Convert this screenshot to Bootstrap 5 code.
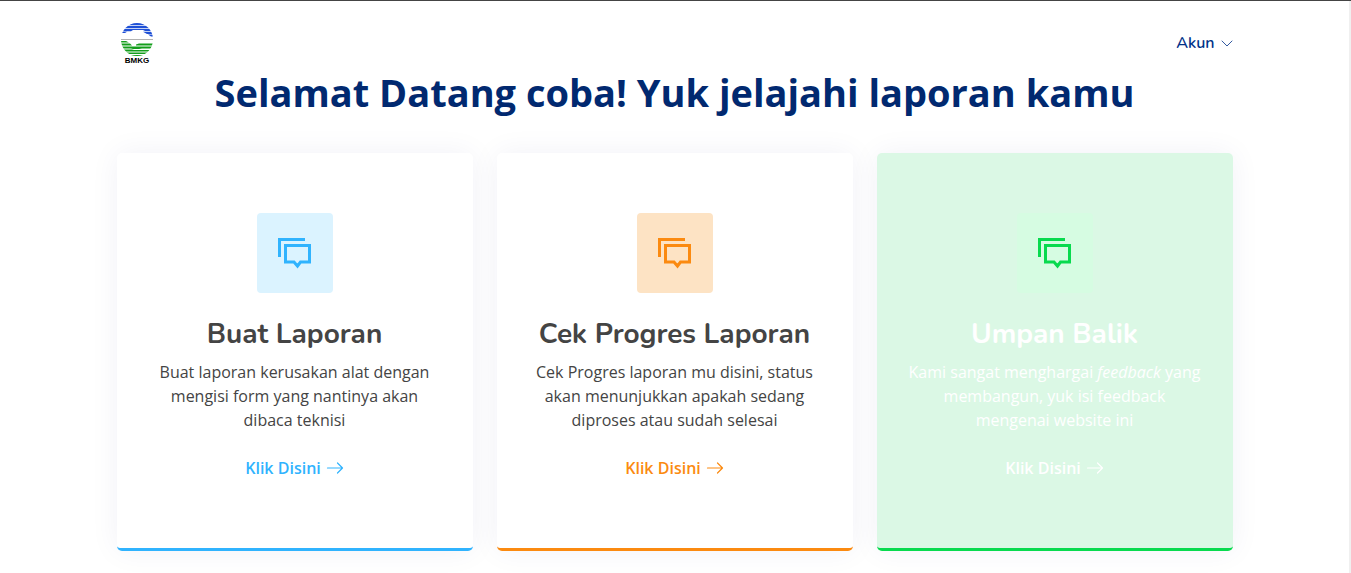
<!DOCTYPE html>
<html lang="id">
<head>
<meta charset="utf-8">
<meta name="viewport" content="width=device-width, initial-scale=1">
<title>BMKG - Laporan</title>
<link href="https://cdn.jsdelivr.net/npm/bootstrap@5.3.0/dist/css/bootstrap.min.css" rel="stylesheet">
<style>
  body { font-family: "Open Sans", sans-serif; color: #444; border-top: 1px solid #444; }
  .page-shell { border-right: 2px solid #f0f0f0; min-height: calc(100vh - 1px); overflow: hidden; }
  .site-header { padding-top: 20px; }
  .site-header .logo { margin-left: 2px; }
  .account-link { font-family: Nunito, Lato, sans-serif; font-weight: 600; color: #013289; line-height: 24px; }
  .account-link svg { opacity: .8; }
  .welcome { color: #012970; font-size: 38px; font-weight: 700; line-height: 46px; margin: 4px 0 38px; }
  .service-box { --tone: #30b3fe; --tint: #dbf3ff; background: #fff; border: 0; border-bottom: 3px solid var(--tone);
    border-radius: 5px; box-shadow: 0 0 30px rgba(1, 41, 112, .06); padding: 60px 30px; text-align: center; color: #444; }
  .service-box.orange { --tone: #fb8a10; --tint: #fde3c4; }
  .service-box.green { --tone: #08da4e; --tint: #d6fce2; background: #dbf8e5; color: #fff; }
  .service-icon { background: var(--tint); color: var(--tone); border-radius: 4px; padding: 22px 20px; margin-bottom: 24px; line-height: 0; }
  .service-box h3 { font-family: Nunito, Lato, sans-serif; font-size: 28px; font-weight: 700; line-height: 34px; margin-bottom: 9px; }
  .read-more { color: var(--tone); font-weight: 600; padding: 8px 30px; gap: 5px; }
  .green .read-more { color: #fff; }
</style>
</head>
<body>
<svg class="d-none" aria-hidden="true">
  <symbol id="discuss" viewBox="0 0 36 36"><path fill="none" stroke="currentColor" stroke-width="3" d="M2.500 22V4.500H28M8.500 10.500H32.500V27H23.500L20.500 31L17 27H8.500Z"/></symbol>
  <symbol id="arrow" viewBox="0 0 18 18"><path fill="none" stroke="currentColor" stroke-width="1.200" stroke-linecap="round" stroke-linejoin="round" d="M1.500 9H16.500M11.500 4L16.500 9L11.500 14"/></symbol>
</svg>
<div class="page-shell">
  <header class="site-header">
    <div class="container-xl d-flex align-items-center justify-content-between">
      <a href="#" class="logo d-flex" aria-label="BMKG">
        <svg width="36" height="44" viewBox="0 0 36 44">
          <defs><clipPath id="disc"><ellipse cx="18" cy="18.500" rx="16" ry="16.500"/></clipPath></defs>
          <g clip-path="url(#disc)">
            <path fill="#1f50d6" d="M0 2H36V4.300H0ZM0 5H36V7.300H0ZM0 8H36V10H26L24 9H14L12 10.200H0ZM0 10.800H8L6 12H0ZM24 10.800H36V13H28ZM29 13.600H36V15.500H32Z"/>
            <path fill="#999" d="M0 18H36V18.800H0Z"/>
            <path fill="#139e1b" d="M0 20H7L10 21.500H0ZM0 22.500H11L13 24.500H0ZM17 23.500L20 22.500H36V24.500H17ZM0 25.500H36V27.500H23L20 28H14L12 27.500H0ZM0 28.500H13L15 29H36V30.500H0ZM0 31.500H36V33H0ZM0 34H36V35H0Z"/>
          </g>
          <text x="18" y="42" text-anchor="middle" font-family="Liberation Sans, sans-serif" font-size="8" font-weight="700" fill="#000">BMKG</text>
        </svg>
      </a>
      <nav>
        <a href="#" class="account-link d-flex align-items-center gap-1 text-decoration-none">Akun
          <svg width="14" height="12" viewBox="0 0 14 12"><path d="M3 4L8 9L13 4" fill="none" stroke="currentColor" stroke-linecap="round" stroke-linejoin="round"/></svg>
        </a>
      </nav>
    </div>
  </header>
  <main class="container-xl">
    <h1 class="welcome text-center">Selamat Datang coba! Yuk jelajahi laporan kamu</h1>
    <div class="row gy-4">
      <div class="col-lg-4 col-md-6">
        <div class="service-box h-100">
          <div class="service-icon d-inline-block"><svg width="36" height="36"><use href="#discuss"/></svg></div>
          <h3>Buat Laporan</h3>
          <p>Buat laporan kerusakan alat dengan mengisi form yang nantinya akan dibaca teknisi</p>
          <a href="#" class="read-more d-inline-flex align-items-center text-decoration-none"><span>Klik Disini</span><svg width="18" height="18"><use href="#arrow"/></svg></a>
        </div>
      </div>
      <div class="col-lg-4 col-md-6">
        <div class="service-box orange h-100">
          <div class="service-icon d-inline-block"><svg width="36" height="36"><use href="#discuss"/></svg></div>
          <h3>Cek Progres Laporan</h3>
          <p>Cek Progres laporan mu disini, status akan menunjukkan apakah sedang diproses atau sudah selesai</p>
          <a href="#" class="read-more d-inline-flex align-items-center text-decoration-none"><span>Klik Disini</span><svg width="18" height="18"><use href="#arrow"/></svg></a>
        </div>
      </div>
      <div class="col-lg-4 col-md-6">
        <div class="service-box green h-100">
          <div class="service-icon d-inline-block"><svg width="36" height="36"><use href="#discuss"/></svg></div>
          <h3>Umpan Balik</h3>
          <p>Kami sangat menghargai <em>feedback</em> yang membangun, yuk isi feedback mengenai website ini</p>
          <a href="#" class="read-more d-inline-flex align-items-center text-decoration-none"><span>Klik Disini</span><svg width="18" height="18"><use href="#arrow"/></svg></a>
        </div>
      </div>
    </div>
  </main>
</div>
<script src="https://cdn.jsdelivr.net/npm/bootstrap@5.3.0/dist/js/bootstrap.bundle.min.js"></script>
</body>
</html>
